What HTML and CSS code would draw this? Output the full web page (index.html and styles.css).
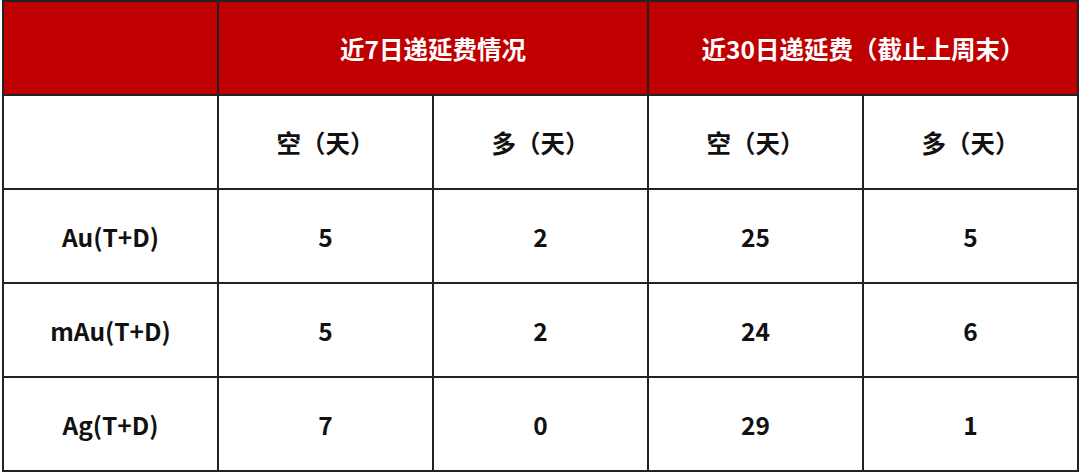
FILE: index.html
```html
<!DOCTYPE html>
<html>
<head>
<meta charset="utf-8">
<link rel="stylesheet" href="styles.css">
</head>
<body>
<table class="tbl">
  <colgroup>
    <col class="c"><col class="c"><col class="c"><col class="c"><col class="c">
  </colgroup>
  <tr class="head">
    <th></th>
    <th colspan="2">近7日递延费情况</th>
    <th colspan="2">近30日递延费（截止上周末）</th>
  </tr>
  <tr>
    <td></td>
    <td>空（天）</td>
    <td>多（天）</td>
    <td>空（天）</td>
    <td>多（天）</td>
  </tr>
  <tr>
    <td>Au(T+D)</td><td>5</td><td>2</td><td>25</td><td>5</td>
  </tr>
  <tr>
    <td>mAu(T+D)</td><td>5</td><td>2</td><td>24</td><td>6</td>
  </tr>
  <tr>
    <td>Ag(T+D)</td><td>7</td><td>0</td><td>29</td><td>1</td>
  </tr>
</table>
</body>
</html>
```
FILE: styles.css
```css
html, body {
  margin: 0;
  padding: 0;
  background: #ffffff;
}
body {
  padding: 0 2px 0 2px;
}
.tbl {
  width: 1076px;
  border-collapse: collapse;
  table-layout: fixed;
  font-family: "Noto Sans CJK SC", "Noto Sans", sans-serif;
  font-weight: 700;
  font-size: 24.5px;
  color: #111;
}
.c {
  width: 215px;
}
.tbl th, .tbl td {
  border: 2px solid #222;
  height: 92px;
  padding: 0;
  text-align: center;
  vertical-align: middle;
}
.head th {
  background: #c00000;
  color: #ffffff;
  font-weight: 700;
}
```
